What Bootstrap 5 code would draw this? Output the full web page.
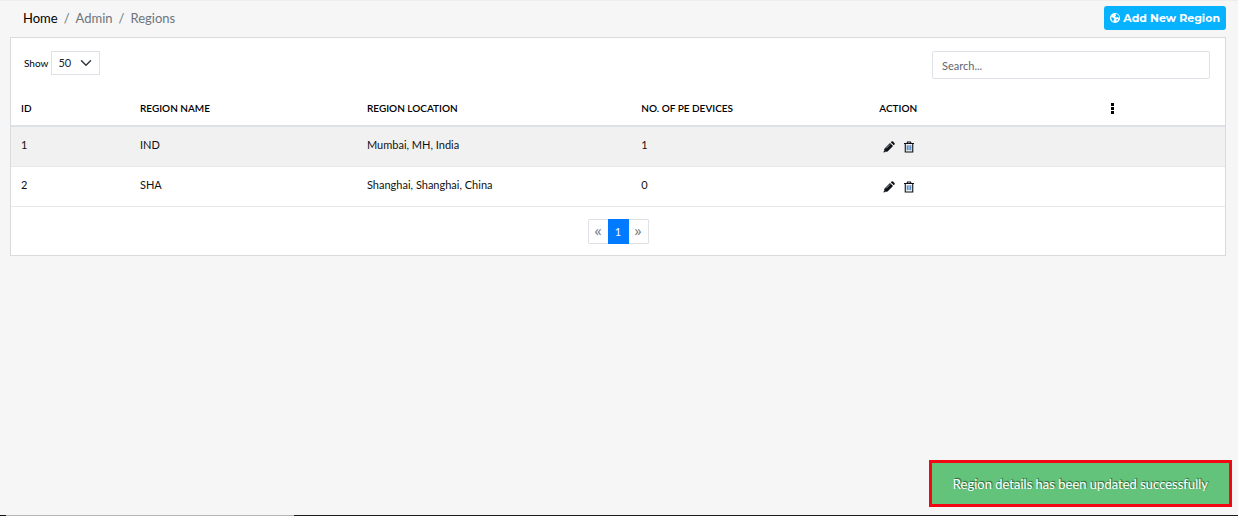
<!DOCTYPE html>
<html lang="en">
<head>
<meta charset="utf-8">
<meta name="viewport" content="width=device-width, initial-scale=1">
<title>Regions</title>
<link href="https://cdn.jsdelivr.net/npm/bootstrap@5.3.0/dist/css/bootstrap.min.css" rel="stylesheet">
<style>
  body { background: #f6f6f6; font-family: Lato, sans-serif; font-size: 11px; line-height: 16px; color: #111; }
  .page-head { height: 37px; padding: 0 12px 2px 23px; border-top: 1px solid #eee; }
  .breadcrumb { font-size: 13px; --bs-breadcrumb-item-padding-x: 6px; --bs-breadcrumb-divider-color: #6c757d; color: #6c757d; }
  .breadcrumb a { color: #000; }
  .btn-add { background: #07b2ff; color: #fff; font: 700 11px/16px Montserrat, Inter, sans-serif; height: 24px; padding: 0 6px; border: 0; border-radius: 3px; gap: 3px; }
  .btn-add:hover { background: #0599dd; color: #fff; }
  .panel { margin: 0 12px 0 10px; background: #fff; border: 1px solid #d8dbde; }
  .tools { padding: 13px 15px 13px 13px; }
  .tools .length-group { gap: 3px; }
  .tools label { font-size: 10px; color: #000; }
  .length-select { width: 49px; height: 24px; padding: 0 6px; font-size: 11px; border: 1px solid #dee2e6; border-radius: 0; background-position: right 7px center; background-size: 12px 12px; }
  .search-box { width: 278px; height: 28px; padding: 0 9px; font-size: 11px; border-radius: 2px; border-color: #dee2e6; }
  .search-box::placeholder { color: #5f666d; }
  .region-table { --bs-table-striped-bg: #f1f1f1; --bs-table-striped-color: #111; --bs-table-color: #111; table-layout: fixed; border-color: #e6e9eb; }
  .region-table th { padding: 8px 10px 9px; font-size: 10px; font-weight: 600; color: #000; border-bottom: 2px solid #dee2e6; vertical-align: middle; }
  .region-table td { padding: 10px 10px 13px; }
  .col-id { width: 9.8%; } .col-name { width: 18.7%; } .col-loc { width: 22.6%; }
  .col-count { width: 19.6%; } .col-act { width: 10.7%; }
  .icon-btn { display: block; padding: 0; border: 0; background: none; line-height: 0; color: #0b1116; }
  .pagination { --bs-pagination-padding-x: 0; --bs-pagination-padding-y: 0; --bs-pagination-font-size: 11px; --bs-pagination-border-color: #dee2e6; --bs-pagination-border-radius: 1px; --bs-pagination-color: #6c757d; --bs-pagination-active-bg: #007bff; --bs-pagination-active-border-color: #007bff; padding: 12px 0 11px; }
  .page-link { width: 21px; height: 25px; line-height: 23px; text-align: center; }
  .page-link.step { font-family: "Open Sans", sans-serif; font-size: 14px; line-height: 21px; }
  .notice { right: 6px; bottom: 9px; padding: 13px 21px 11px; background: #64c37b; border: 3px solid #f40612; color: #fff; font-size: 13px; line-height: 17px; text-shadow: 1px -1px 1px #245c34; }
  .edge { height: 1px; background: linear-gradient(90deg, #111 6px, #b5b5b5 6px 294px, #1c1b18 294px); }
</style>
</head>
<body class="d-flex flex-column min-vh-100">
<header class="page-head d-flex align-items-center justify-content-between">
  <nav aria-label="breadcrumb">
    <ol class="breadcrumb mb-0">
      <li class="breadcrumb-item"><a href="#" class="text-decoration-none">Home</a></li>
      <li class="breadcrumb-item">Admin</li>
      <li class="breadcrumb-item" aria-current="page">Regions</li>
    </ol>
  </nav>
  <button type="button" class="btn btn-add d-flex align-items-center">
    <svg width="10" height="10" viewBox="0 0 20 20" aria-hidden="true"><circle cx="10" cy="10" r="10" fill="#fff"/><path fill="#07b2ff" d="M11 2l3 0 4 4 0 4-3-2-3 1-2-2 2-2zM2 8l4 1 3 3-2 2 0 4-3-3zM13 12l3 0-1 3-2 1z"/></svg>
    <span>Add New Region</span>
  </button>
</header>

<main class="flex-grow-1">
  <section class="panel">
    <div class="tools d-flex justify-content-between align-items-start">
      <div class="length-group d-flex align-items-center">
        <label for="length">Show</label>
        <select id="length" class="form-select length-select"><option>50</option><option>100</option></select>
      </div>
      <input type="search" class="form-control search-box" placeholder="Search..." aria-label="Search">
    </div>
    <table class="table table-striped region-table mb-0">
      <thead>
        <tr>
          <th class="col-id">ID</th><th class="col-name">REGION NAME</th><th class="col-loc">REGION LOCATION</th>
          <th class="col-count">NO. OF PE DEVICES</th><th class="col-act">ACTION</th>
          <th><button type="button" class="icon-btn mx-auto" aria-label="Columns"><svg width="3" height="11" viewBox="0 0 3 11" fill="#000"><rect width="3" height="3"/><rect y="4" width="3" height="3"/><rect y="8" width="3" height="3"/></svg></button></th>
        </tr>
      </thead>
      <tbody>
        <tr>
          <td>1</td><td>IND</td><td>Mumbai, MH, India</td><td>1</td>
          <td><div class="d-flex gap-2 ps-1 pt-1">
            <button type="button" class="icon-btn" aria-label="Edit IND"><svg width="12" height="12" viewBox="0 0 24 24"><use href="#pencil"/></svg></button>
            <button type="button" class="icon-btn" aria-label="Delete IND"><svg width="12" height="12" viewBox="0 0 24 24"><use href="#trash"/></svg></button>
          </div></td><td></td>
        </tr>
        <tr>
          <td>2</td><td>SHA</td><td>Shanghai, Shanghai, China</td><td>0</td>
          <td><div class="d-flex gap-2 ps-1 pt-1">
            <button type="button" class="icon-btn" aria-label="Edit SHA"><svg width="12" height="12" viewBox="0 0 24 24"><use href="#pencil"/></svg></button>
            <button type="button" class="icon-btn" aria-label="Delete SHA"><svg width="12" height="12" viewBox="0 0 24 24"><use href="#trash"/></svg></button>
          </div></td><td></td>
        </tr>
      </tbody>
    </table>
    <nav aria-label="Pages">
      <ul class="pagination justify-content-center mb-0">
        <li class="page-item"><a class="page-link step" href="#" aria-label="Previous">«</a></li>
        <li class="page-item active"><a class="page-link" href="#">1</a></li>
        <li class="page-item"><a class="page-link step" href="#" aria-label="Next">»</a></li>
      </ul>
    </nav>
  </section>
</main>

<div class="notice position-fixed" role="status">Region details has been updated successfully</div>
<div class="edge"></div>

<svg width="0" height="0" class="position-absolute" aria-hidden="true">
  <symbol id="pencil" viewBox="0 0 24 24"><path fill="currentColor" d="M1 23l2-8L14 4l6 6L9 21zM15.500 2.500L17 1q1.500-1 3 0l3 3q1 1.500 0 3l-1.500 1.500z"/><path d="M6 15l8-8M3 19l2 2" stroke="#fff" stroke-width="1.200"/></symbol>
  <symbol id="trash" viewBox="0 0 24 24"><path fill="none" stroke="currentColor" stroke-width="2.200" d="M2 5h20M8 5l1-3h6l1 3M4.500 5v17h15V5"/><path stroke="#2f6fb5" stroke-width="2" d="M8.500 8.500v10M12 8.500v10M15.500 8.500v10"/></symbol>
</svg>
<script src="https://cdn.jsdelivr.net/npm/bootstrap@5.3.0/dist/js/bootstrap.bundle.min.js"></script>
</body>
</html>
